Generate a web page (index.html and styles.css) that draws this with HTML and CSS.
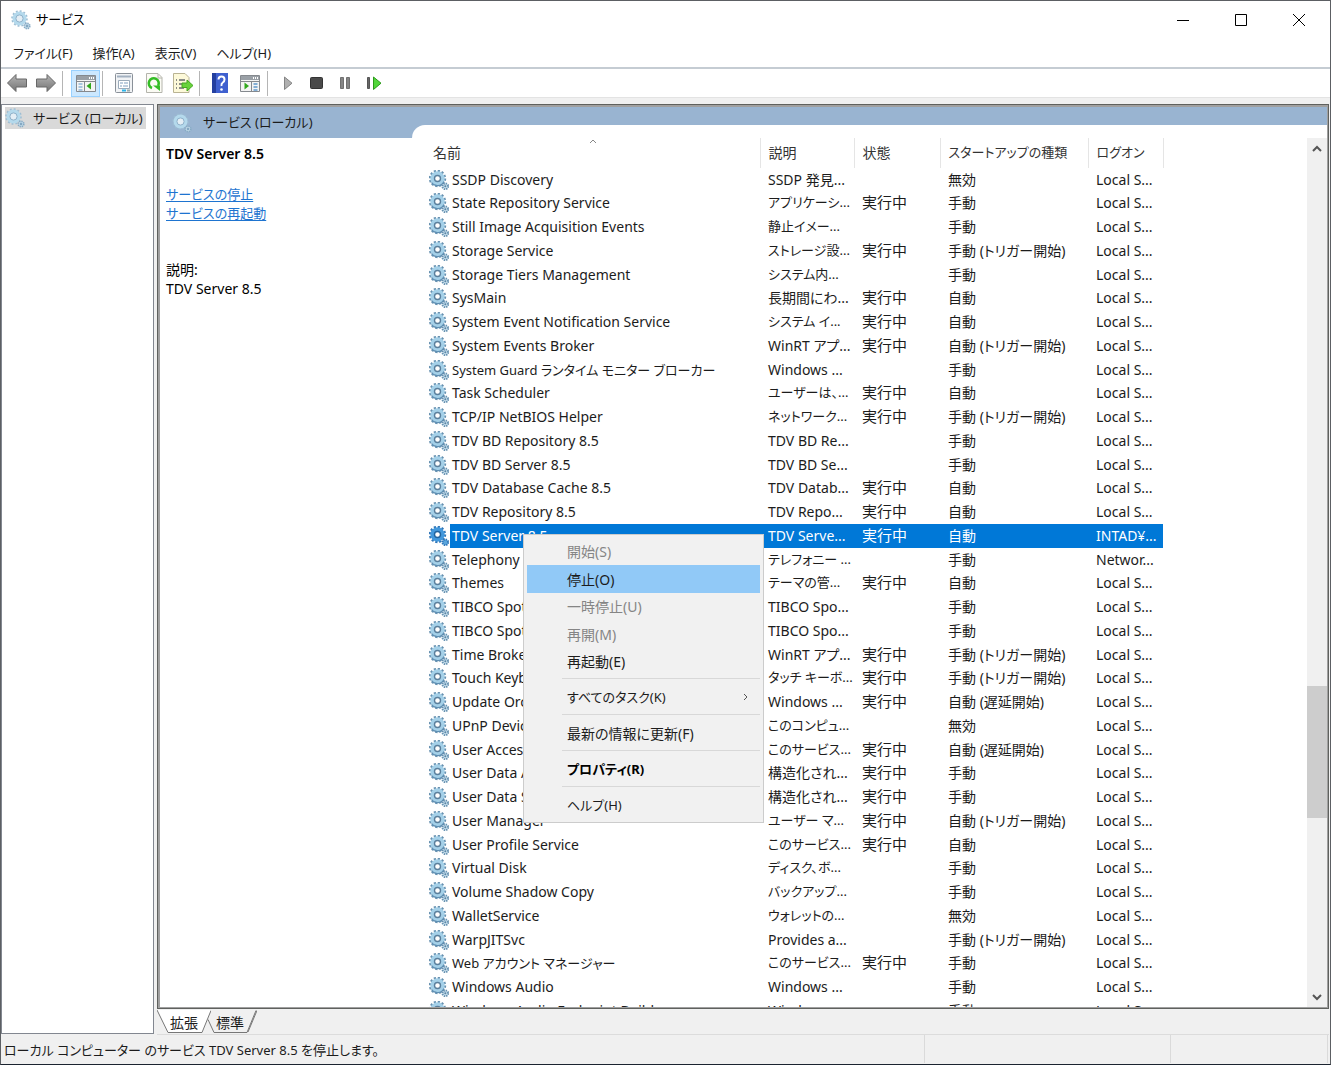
FILE: index.html
```html
<!DOCTYPE html>
<html lang="ja">
<head>
<meta charset="utf-8">
<title>サービス</title>
<link rel="stylesheet" href="styles.css">
</head>
<body>
<svg class="defs" width="0" height="0" aria-hidden="true">
  <symbol id="gear" viewBox="0 0 20 20">
    <circle cx="8.5" cy="8.5" r="7.6" fill="none" stroke="#6791b0" stroke-width="2.2" stroke-dasharray="2.2 1.780"/>
    <circle cx="8.5" cy="8.5" r="5" fill="none" stroke="#a4d0e8" stroke-width="4.4"/>
    <path d="M2.500 12.500a7.200 7.200 0 0 0 12.500-1" fill="none" stroke="#5f8fb3" stroke-width="1.300"/>
    <circle cx="8.5" cy="8.5" r="3" fill="#fff" stroke="#5a7f9c" stroke-width="1.4"/>
    <circle cx="16.3" cy="16.3" r="2.9" fill="#c4dcea" stroke="#6490b0" stroke-width="2" stroke-dasharray="1.300 .98"/>
    <circle cx="16.3" cy="16.3" r="1" fill="#5a86a6"/>
  </symbol>
  <symbol id="gear-soft" viewBox="0 0 20 20">
    <circle cx="8.5" cy="8.5" r="7.4" fill="none" stroke="#9dbdd3" stroke-width="1.8" stroke-dasharray="1.900 1.970"/>
    <circle cx="8.5" cy="8.5" r="5.2" fill="none" stroke="#b4d9ec" stroke-width="3.6"/>
    <circle cx="8.5" cy="8.5" r="3.6" fill="#e4eef5" stroke="#8fb2cb"/>
    <circle cx="16" cy="16" r="2.7" fill="#c4dcea" stroke="#86aac4" stroke-width="1.8" stroke-dasharray="1.300 .82"/>
    <circle cx="16" cy="16" r="1" fill="#6f97b4"/>
  </symbol>
  <symbol id="gear-selected" viewBox="0 0 20 20">
    <circle cx="8.5" cy="8.5" r="7.6" fill="none" stroke="#2f76b8" stroke-width="2.2" stroke-dasharray="2.200 1.780"/>
    <circle cx="8.5" cy="8.5" r="5" fill="none" stroke="#4298dc" stroke-width="4.4"/>
    <circle cx="8.5" cy="8.5" r="3" fill="#fff" stroke="#20639f" stroke-width="1.4"/>
    <circle cx="16.3" cy="16.3" r="2.9" fill="#5aa5dc" stroke="#2f76b8" stroke-width="2" stroke-dasharray="1.300 .98"/>
  </symbol>
  <linearGradient id="metal" x1="0" y1="0" x2="0" y2="1"><stop offset="0" stop-color="#b5b5b5"/><stop offset="1" stop-color="#747474"/></linearGradient>
</svg>

<div class="window">
  <header class="titlebar">
    <svg class="icon"><use href="#gear-soft"/></svg>
    <h1>サービス</h1>
    <div class="caption-buttons">
      <button aria-label="最小化"><svg width="14" height="14"><path d="M1 7.500h12" stroke="#000"/></svg></button>
      <button aria-label="最大化"><svg width="14" height="14"><path d="M1.500 1.500h11v11h-11z" fill="none" stroke="#000"/></svg></button>
      <button aria-label="閉じる"><svg width="14" height="14"><path d="M1 1l12 12M13 1L1 13" stroke="#000"/></svg></button>
    </div>
  </header>

  <nav class="menubar">
    <button>ファイル(F)</button><button>操作(A)</button><button>表示(V)</button><button>ヘルプ(H)</button>
  </nav>

  <div class="toolbar">
    <button aria-label="戻る"><svg width="22" height="22"><path d="M1.500 11L10 2.500V7h10.500v8H10v4.500z" fill="url(#metal)" stroke="#686868"/></svg></button>
    <button aria-label="進む"><svg width="22" height="22"><path d="M20.500 11L12 2.500V7H1.500v8H12v4.500z" fill="url(#metal)" stroke="#686868"/></svg></button>
    <span class="divider"></span>
    <button class="pressed" aria-label="コンソール ツリーの表示"><svg width="22" height="22"><path d="M1.500 3.500h19v16h-19z" fill="#f4f4f4" stroke="#85898e"/><path d="M2 4h18v4H2z" fill="#9aa0a6"/><path d="M14 6h1m1 0h1m1 0h1" stroke="#fff" stroke-width="2"/><path d="M2 9.500h18M9.500 10v9" stroke="#85898e"/><path d="M3.500 12h4m-4 3h4m-4 3h4" stroke="#5f98cc"/><path d="M16 10.500v7L11.500 14z" fill="#31a81c"/></svg></button>
    <span class="divider"></span>
    <button class="wide" aria-label="プロパティ"><svg width="22" height="22"><rect x="2.500" y="1.500" width="17" height="19" rx="1" fill="#f1f3f5" stroke="#8a9199"/><path d="M4 4.500h14" stroke="#a3b1c0" stroke-width="2"/><path d="M5.500 8.500h11v8h-11z" fill="#fff" stroke="#9babba"/><path d="M7 11h3m1 0h4m-8 3h2m1 0h5" stroke="#7f9ebe"/><path d="M9 18.500h4" stroke="#2ab4e8" stroke-width="2"/><path d="M14 18.500h3" stroke="#9aa" stroke-width="2"/></svg></button>
    <button aria-label="最新の情報に更新"><svg width="22" height="22"><path d="M3.500 1.500H15l4 4v15H3.500z" fill="#fbfbf4" stroke="#b4b4ac"/><path d="M15 2v4h4" fill="none" stroke="#b4b4ac"/><path d="M9 16a5 5 0 1 1 6-2" fill="none" stroke="#35bd26" stroke-width="2.600"/><path d="M10 13.500h7V19z" fill="#35bd26"/></svg></button>
    <button aria-label="一覧のエクスポート"><svg width="22" height="22"><path d="M1.500 1.500H13l4 4v15H1.500z" fill="#fdf9d9" stroke="#b9b393"/><path d="M4 8h1m2 0h6M4 12h1m2 0h4M4 16h1m2 0h5" stroke="#66696d" stroke-width="1.500"/><path d="M10 11h5V8l6 5.500-6 5.500v-3.500h-5z" fill="#68d33b" stroke="#45a822"/></svg></button>
    <span class="divider"></span>
    <button aria-label="ヘルプ"><svg width="22" height="22"><path d="M3 1h16v20H3z" fill="#3f60cf"/><path d="M3 1h4v20H3z" fill="#243f9f"/><path d="M9.500 7.500q0-3 3-3t3 3q0 2-1.700 3t-1.300 3.500" fill="none" stroke="#fff" stroke-width="2"/><circle cx="12.500" cy="17.500" r="1.300" fill="#fff"/></svg></button>
    <button class="wide" aria-label="操作ウィンドウの表示"><svg width="22" height="22"><path d="M1.500 3.500h19v16h-19z" fill="#f4f4f4" stroke="#85898e"/><path d="M2 4h18v4H2z" fill="#9aa0a6"/><path d="M14 6h1m1 0h1m1 0h1" stroke="#fff" stroke-width="2"/><path d="M2 9.500h18M12.500 10v9" stroke="#85898e"/><path d="M14.500 12h4m-4 3h4m-4 3h4" stroke="#5f98cc" stroke-width="1.500"/><path d="M5.500 10.500v7L10 14z" fill="#31a81c"/></svg></button>
    <span class="divider"></span>
    <button aria-label="サービスの開始"><svg width="22" height="22"><path d="M7.500 5v12.500l7.500-6.300z" fill="#b0b0b0" stroke="#858585"/></svg></button>
    <button aria-label="サービスの停止"><svg width="22" height="22"><rect x="4.500" y="5.500" width="12" height="11" rx="1" fill="#4a4a4a" stroke="#333"/></svg></button>
    <button aria-label="サービスの一時停止"><svg width="22" height="22"><path d="M5.500 5.500h3v11h-3zM11.500 5.500h3v11h-3z" fill="#858585" stroke="#707070"/></svg></button>
    <button aria-label="サービスの再起動"><svg width="22" height="22"><path d="M3.500 5.500h2v11h-2z" fill="#666" stroke="#555"/><path d="M9.500 5v12.500l7.500-6.300z" fill="#52d63a" stroke="#2c9a1b"/></svg></button>
  </div>

  <main class="workspace">
    <aside class="tree">
      <a href="#services" class="tree-item"><svg class="icon"><use href="#gear-soft"/></svg>サービス (ローカル)</a>
    </aside>

    <div class="content">
      <section class="panel" id="services">
        <div class="details">
          <h2 class="panel-head"><svg class="icon"><use href="#gear-soft"/></svg>サービス (ローカル)</h2>
          <div class="details-body">
            <h3>TDV Server 8.5</h3>
            <p class="actions"><a href="#stop">サービスの停止</a><br><a href="#restart">サービスの再起動</a></p>
            <p>説明:<br>TDV Server 8.5</p>
          </div>
        </div>
        <div class="list-side">
          <div class="list-curve">
            <div class="list">
              <table>
                <colgroup><col class="c-name"><col class="c-desc"><col class="c-state"><col class="c-start"><col class="c-logon"></colgroup>
                <thead><tr><th>名前<svg class="sort" width="8" height="5"><path d="M1 4l3-3 3 3" fill="none" stroke="#888"/></svg></th><th>説明</th><th>状態</th><th class="kana">スタートアップの種類</th><th class="kana">ログオン</th></tr></thead>
                <tbody>
                <tr><td><svg class="icon"><use href="#gear"/></svg><span>SSDP Discovery</span></td><td>SSDP 発見...</td><td></td><td>無効</td><td>Local S...</td></tr>
                <tr><td><svg class="icon"><use href="#gear"/></svg><span>State Repository Service</span></td><td class="kana">アプリケーシ...</td><td>実行中</td><td>手動</td><td>Local S...</td></tr>
                <tr><td><svg class="icon"><use href="#gear"/></svg><span>Still Image Acquisition Events</span></td><td class="kana">静止イメー...</td><td></td><td>手動</td><td>Local S...</td></tr>
                <tr><td><svg class="icon"><use href="#gear"/></svg><span>Storage Service</span></td><td class="kana">ストレージ設...</td><td>実行中</td><td>手動 (トリガー開始)</td><td>Local S...</td></tr>
                <tr><td><svg class="icon"><use href="#gear"/></svg><span>Storage Tiers Management</span></td><td class="kana">システム内...</td><td></td><td>手動</td><td>Local S...</td></tr>
                <tr><td><svg class="icon"><use href="#gear"/></svg><span>SysMain</span></td><td>長期間にわ...</td><td>実行中</td><td>自動</td><td>Local S...</td></tr>
                <tr><td><svg class="icon"><use href="#gear"/></svg><span>System Event Notification Service</span></td><td class="kana">システム イ...</td><td>実行中</td><td>自動</td><td>Local S...</td></tr>
                <tr><td><svg class="icon"><use href="#gear"/></svg><span>System Events Broker</span></td><td>WinRT アプ...</td><td>実行中</td><td>自動 (トリガー開始)</td><td>Local S...</td></tr>
                <tr><td><svg class="icon"><use href="#gear"/></svg><span class="kana">System Guard ランタイム モニター ブローカー</span></td><td>Windows ...</td><td></td><td>手動</td><td>Local S...</td></tr>
                <tr><td><svg class="icon"><use href="#gear"/></svg><span>Task Scheduler</span></td><td class="kana">ユーザーは、...</td><td>実行中</td><td>自動</td><td>Local S...</td></tr>
                <tr><td><svg class="icon"><use href="#gear"/></svg><span>TCP/IP NetBIOS Helper</span></td><td class="kana">ネットワーク...</td><td>実行中</td><td>手動 (トリガー開始)</td><td>Local S...</td></tr>
                <tr><td><svg class="icon"><use href="#gear"/></svg><span>TDV BD Repository 8.5</span></td><td>TDV BD Re...</td><td></td><td>手動</td><td>Local S...</td></tr>
                <tr><td><svg class="icon"><use href="#gear"/></svg><span>TDV BD Server 8.5</span></td><td>TDV BD Se...</td><td></td><td>手動</td><td>Local S...</td></tr>
                <tr><td><svg class="icon"><use href="#gear"/></svg><span>TDV Database Cache 8.5</span></td><td>TDV Datab...</td><td>実行中</td><td>自動</td><td>Local S...</td></tr>
                <tr><td><svg class="icon"><use href="#gear"/></svg><span>TDV Repository 8.5</span></td><td>TDV Repo...</td><td>実行中</td><td>自動</td><td>Local S...</td></tr>
                <tr class="selected"><td><svg class="icon"><use href="#gear-selected"/></svg><span>TDV Server 8.5</span></td><td>TDV Serve...</td><td>実行中</td><td>自動</td><td>INTAD¥...</td></tr>
                <tr><td><svg class="icon"><use href="#gear"/></svg><span>Telephony</span></td><td class="kana">テレフォニー ...</td><td></td><td>手動</td><td>Networ...</td></tr>
                <tr><td><svg class="icon"><use href="#gear"/></svg><span>Themes</span></td><td class="kana">テーマの管...</td><td>実行中</td><td>自動</td><td>Local S...</td></tr>
                <tr><td><svg class="icon"><use href="#gear"/></svg><span>TIBCO Spotfire</span></td><td>TIBCO Spo...</td><td></td><td>手動</td><td>Local S...</td></tr>
                <tr><td><svg class="icon"><use href="#gear"/></svg><span>TIBCO Spotfire</span></td><td>TIBCO Spo...</td><td></td><td>手動</td><td>Local S...</td></tr>
                <tr><td><svg class="icon"><use href="#gear"/></svg><span>Time Broker</span></td><td>WinRT アプ...</td><td>実行中</td><td>手動 (トリガー開始)</td><td>Local S...</td></tr>
                <tr><td><svg class="icon"><use href="#gear"/></svg><span>Touch Keyboard</span></td><td class="kana">タッチ キーボ...</td><td>実行中</td><td>手動 (トリガー開始)</td><td>Local S...</td></tr>
                <tr><td><svg class="icon"><use href="#gear"/></svg><span>Update Orchestrator</span></td><td>Windows ...</td><td>実行中</td><td>自動 (遅延開始)</td><td>Local S...</td></tr>
                <tr><td><svg class="icon"><use href="#gear"/></svg><span>UPnP Device Host</span></td><td class="kana">このコンピュ...</td><td></td><td>無効</td><td>Local S...</td></tr>
                <tr><td><svg class="icon"><use href="#gear"/></svg><span>User Access Logging</span></td><td class="kana">このサービス...</td><td>実行中</td><td>自動 (遅延開始)</td><td>Local S...</td></tr>
                <tr><td><svg class="icon"><use href="#gear"/></svg><span>User Data Access</span></td><td>構造化され...</td><td>実行中</td><td>手動</td><td>Local S...</td></tr>
                <tr><td><svg class="icon"><use href="#gear"/></svg><span>User Data Storage</span></td><td>構造化され...</td><td>実行中</td><td>手動</td><td>Local S...</td></tr>
                <tr><td><svg class="icon"><use href="#gear"/></svg><span>User Manager</span></td><td class="kana">ユーザー マ...</td><td>実行中</td><td>自動 (トリガー開始)</td><td>Local S...</td></tr>
                <tr><td><svg class="icon"><use href="#gear"/></svg><span>User Profile Service</span></td><td class="kana">このサービス...</td><td>実行中</td><td>自動</td><td>Local S...</td></tr>
                <tr><td><svg class="icon"><use href="#gear"/></svg><span>Virtual Disk</span></td><td class="kana">ディスク、ボ...</td><td></td><td>手動</td><td>Local S...</td></tr>
                <tr><td><svg class="icon"><use href="#gear"/></svg><span>Volume Shadow Copy</span></td><td class="kana">バックアップ...</td><td></td><td>手動</td><td>Local S...</td></tr>
                <tr><td><svg class="icon"><use href="#gear"/></svg><span>WalletService</span></td><td class="kana">ウォレットの...</td><td></td><td>無効</td><td>Local S...</td></tr>
                <tr><td><svg class="icon"><use href="#gear"/></svg><span>WarpJITSvc</span></td><td>Provides a...</td><td></td><td>手動 (トリガー開始)</td><td>Local S...</td></tr>
                <tr><td><svg class="icon"><use href="#gear"/></svg><span class="kana">Web アカウント マネージャー</span></td><td class="kana">このサービス...</td><td>実行中</td><td>手動</td><td>Local S...</td></tr>
                <tr><td><svg class="icon"><use href="#gear"/></svg><span>Windows Audio</span></td><td>Windows ...</td><td></td><td>手動</td><td>Local S...</td></tr>
                <tr><td><svg class="icon"><use href="#gear"/></svg><span>Windows Audio Endpoint Builder</span></td><td>Windows ...</td><td></td><td>手動</td><td>Local S...</td></tr>
                </tbody>
              </table>
              <div class="scrollbar">
                <button aria-label="上へ"><svg width="10" height="8"><path d="M1 6l4-4 4 4" fill="none" stroke="#555" stroke-width="2"/></svg></button>
                <div class="track"><div class="thumb"></div></div>
                <button aria-label="下へ"><svg width="10" height="8"><path d="M1 2l4 4 4-4" fill="none" stroke="#555" stroke-width="2"/></svg></button>
              </div>
            </div>
          </div>
        </div>
      </section>
      <div class="tabs">
        <button class="tab active"><svg width="54" height="24"><path d="M0 0l11 22.500h34L54 0z" fill="#fff"/><path d="M0 0l11 22.500h34L54 .5" fill="none" stroke="#777"/></svg><span>拡張</span></button>
        <button class="tab"><svg width="50" height="24"><path d="M1 9.500l6 13h33L49 .5" fill="none" stroke="#777"/><path d="M41 22L50 .5" stroke="#777"/></svg><span>標準</span></button>
      </div>
    </div>
  </main>

  <footer class="statusbar">
    <span class="message">ローカル コンピューター のサービス TDV Server 8.5 を停止します。</span>
    <span class="cell"></span><span class="cell last"></span>
  </footer>

  <menu class="context-menu">
    <li><button disabled>開始(S)</button></li>
    <li><button class="hover">停止(O)</button></li>
    <li><button disabled>一時停止(U)</button></li>
    <li><button disabled>再開(M)</button></li>
    <li><button>再起動(E)</button></li>
    <li class="group"><button class="kana">すべてのタスク(K)<svg width="5" height="8"><path d="M1 1l3 3-3 3" fill="none" stroke="#555"/></svg></button></li>
    <li class="group"><button>最新の情報に更新(F)</button></li>
    <li class="group"><button class="default kana">プロパティ(R)</button></li>
    <li class="group"><button class="kana">ヘルプ(H)</button></li>
  </menu>
</div>
</body>
</html>
```
FILE: styles.css
```css
* { box-sizing: border-box; }

body {
  margin: 0;
  color: #1c1c1c;
  background: #fff;
  font-family: "Noto Sans", "Noto Sans CJK JP", sans-serif;
  font-size: 14px;
  line-height: 19px;
  font-feature-settings: "palt";
  overflow: hidden;
}

button {
  margin: 0;
  padding: 0;
  border: 0;
  background: none;
  color: inherit;
  font: inherit;
  font-feature-settings: inherit;
}

h1, h2, h3, p, menu { margin: 0; padding: 0; font-size: inherit; font-weight: 400; }
svg { display: block; flex: none; }
.defs { position: absolute; }
.icon { width: 20px; height: 20px; }

/* Labels made mostly of kana are set a step smaller */
.kana, .titlebar, .menubar, .tree, .panel-head, .actions { font-size: 13px; }

.window {
  position: relative;
  display: flex;
  flex-direction: column;
  height: 100vh;
  border: 1px solid #5c5f63;
  border-bottom-color: #1b2430;
  background: #f0f0f0;
}

/* Title, menus and toolbar */
.titlebar {
  display: flex;
  align-items: center;
  height: 37px;
  padding-left: 10px;
  gap: 5px;
  background: #fff;
  color: #000;
}
.caption-buttons { display: flex; margin: 0 2px 0 auto; }
.caption-buttons button { display: grid; place-items: center; width: 58px; height: 37px; }

.menubar {
  display: flex;
  gap: 20px;
  height: 29px;
  padding: 3px 12px 0;
  background: #fff;
}
.menubar button { height: 24px; }

.toolbar {
  display: flex;
  align-items: center;
  height: 31px;
  padding-left: 1px;
  border-top: 2px solid #c5ccd3;
  border-bottom: 1px solid #e3e3e3;
  background: #fff;
}
.toolbar button { display: grid; place-items: center; width: 29px; height: 27px; }
.toolbar .wide { width: 31px; }
.toolbar .divider { width: 1px; height: 25px; margin: 0 2px; background: #b5b5b5; }
.toolbar .divider + button { margin-left: 3px; }
.toolbar .divider + .pressed { margin-left: 6px; border: 1px solid #99d1ff; background: #cce8ff; }

/* Panes */
.workspace { display: flex; flex: 1; gap: 3px; min-height: 0; padding-top: 6px; }
.tree {
  width: 153px;
  margin-bottom: 1px;
  padding: 2px 3px;
  border: 1px solid #828790;
  background: #fff;
}
.tree-item {
  display: inline-flex;
  align-items: center;
  gap: 8px;
  height: 22px;
  padding-right: 3px;
  background: #d9d9d9;
  color: inherit;
  text-decoration: none;
  white-space: nowrap;
}
.content { display: flex; flex: 1; flex-direction: column; min-width: 0; padding-right: 1px; }
.panel {
  display: flex;
  flex: 1;
  min-height: 0;
  padding: 2px 1px 1px 2px;
  border: 1px solid #5f615e;
  background: #a0a0a0;
}

.details { flex: none; width: 252px; background: #fff; }
.panel-head {
  display: flex;
  align-items: center;
  gap: 11px;
  height: 31px;
  padding-left: 12px;
  background: #99b4d1;
}
.details-body { padding: 6px; color: #000; }
.details-body h3 { font-weight: 600; }
.actions { margin: 22px 0 37px; }
.actions a { color: #1e74d0; text-underline-offset: 2px; }

.list-side { display: flex; flex: 1; flex-direction: column; min-width: 0; padding-top: 18px; background: linear-gradient(#99b4d1 31px, #fff 31px); }
.list-curve { display: flex; flex: 1; min-height: 0; padding: 13px 0 0 17px; border-radius: 13px 0 0 0; background: #fff; }
.list { display: flex; flex: 1; min-width: 0; overflow: hidden; }

table { width: 734px; align-self: flex-start; border-collapse: collapse; table-layout: fixed; }
.c-name { width: 331px; }
.c-desc { width: 94px; }
.c-state { width: 86px; }
.c-start { width: 148px; }
.c-logon { width: 75px; }
th, td { padding: 0 0 1px 8px; text-align: left; white-space: nowrap; }
th { position: relative; height: 30px; border-right: 1px solid #e5e5e5; color: #333; font-weight: 400; }
th:first-child { padding-left: 4px; }
.sort { position: absolute; left: 160px; top: 1px; }
tbody tr { height: 24px; }
tbody tr:nth-child(4n+1) { height: 23px; }
td:first-child { display: flex; align-items: center; height: inherit; padding: 0; }
td:first-child span { flex: 1; margin-left: 1px; padding-left: 2px; line-height: 24px; }
td:nth-child(3) { font-size: 15px; }
.selected { color: #fff; }
.selected td:not(:first-child), .selected td:first-child span { background: #0078d7; }

.scrollbar { display: flex; flex-direction: column; width: 20px; margin-left: auto; background: #f0f0f0; }
.scrollbar button { display: grid; place-items: center; width: 20px; height: 21px; }
.track { display: flex; flex: 1; flex-direction: column; justify-content: flex-end; padding-bottom: 168px; }
.thumb { height: 20%; background: #cdcdcd; }

.tabs { display: flex; height: 26px; padding-top: 1px; border-bottom: 1px solid #dcdcdc; }
.tab { position: relative; flex: none; width: 50px; height: 24px; }
.tab svg { position: absolute; left: 0; top: 0; }
.tab span { position: relative; }
.tab.active { z-index: 1; padding-left: 4px; }
.tab:not(.active) { padding-right: 4px; }

.statusbar { display: flex; height: 29px; padding-right: 2px; }
.statusbar .message { flex: 1; padding: 6px 3px; font-size: 13px; }
.statusbar .cell { width: 246px; margin-bottom: 1px; border-left: 1px solid #dadada; }
.statusbar .last { width: 158px; border-right: 1px solid #dadada; }

/* Context menu over the selected service */
.context-menu {
  position: absolute;
  left: 522px;
  top: 533px;
  width: 241px;
  padding: 3px;
  border: 1px solid #ccc;
  background: #f1f1f1;
  list-style: none;
}
.context-menu button { display: flex; align-items: center; width: 100%; height: 27px; padding: 0 12px 0 40px; text-align: left; }
.context-menu li:nth-child(even) button, .context-menu .group button { height: 28px; }
.context-menu button:disabled { color: #858585; }
.context-menu .hover { background: #91c9f7; }
.context-menu .default { color: #000; font-weight: 700; }
.context-menu svg { margin-left: auto; }
.context-menu .group::before { content: ""; display: block; margin: 3px 0 4px 35px; border-top: 1px solid #d8d8d8; }
```
